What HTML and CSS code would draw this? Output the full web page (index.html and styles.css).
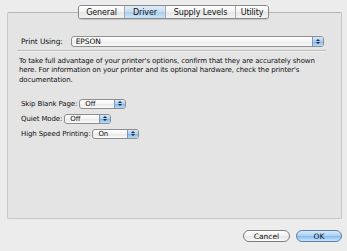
FILE: index.html
```html
<!DOCTYPE html>
<html lang="en">
<head>
    <meta charset="UTF-8">
    <title>Print Options</title>
    <link rel="stylesheet" href="styles.css">
</head>
<body>
    <div class="window">
        <div class="tabs">
            <div class="tab">General</div>
            <div class="tab selected">Driver</div>
            <div class="tab">Supply Levels</div>
            <div class="tab last">Utility</div>
        </div>
        <div class="panel">
            <div class="print-row">
                <span class="label">Print Using:</span>
                <div class="popup wide">
                    <span class="value">EPSON</span>
                    <span class="arrows"><i class="up"></i><i class="down"></i></span>
                </div>
            </div>
            <div class="sep"></div>
            <p class="info">To take full advantage of your printer's options, confirm that they are accurately shown here. For information on your printer and its optional hardware, check the printer's documentation.</p>
            <div class="options">
                <div class="option">
                    <span class="label">Skip Blank Page:</span>
                    <div class="popup">
                        <span class="value">Off</span>
                        <span class="arrows"><i class="up"></i><i class="down"></i></span>
                    </div>
                </div>
                <div class="option">
                    <span class="label">Quiet Mode:</span>
                    <div class="popup">
                        <span class="value">Off</span>
                        <span class="arrows"><i class="up"></i><i class="down"></i></span>
                    </div>
                </div>
                <div class="option">
                    <span class="label">High Speed Printing:</span>
                    <div class="popup">
                        <span class="value">On</span>
                        <span class="arrows"><i class="up"></i><i class="down"></i></span>
                    </div>
                </div>
            </div>
        </div>
        <div class="buttons">
            <button class="btn">Cancel</button>
            <button class="btn default">OK</button>
        </div>
    </div>
</body>
</html>
```

FILE: styles.css
```css
body {
    margin: 0;
    background-color: #ececec;
    font-family: "DejaVu Sans", sans-serif;
    font-size: 7px;
    letter-spacing: -0.12px;
    color: #111;
}
.window {
    width: 347px;
    height: 251px;
    padding-top: 5px;
    box-sizing: border-box;
}
.tabs {
    display: flex;
    margin-left: 78px;
    width: 191px;
    height: 14px;
    position: relative;
    z-index: 1;
    border: 1px solid #8a8a8a;
    border-radius: 3px;
    box-sizing: border-box;
    overflow: hidden;
    box-shadow: 0 1px 1px rgba(0, 0, 0, 0.15);
}
.tab {
    display: flex;
    align-items: center;
    justify-content: center;
    font-size: 8px;
    background: linear-gradient(#ffffff, #f1f1f1 50%, #e6e6e6 51%, #f4f4f4);
    border-right: 1px solid #a9a9a9;
}
.tab:nth-child(1) { width: 45px; }
.tab:nth-child(2) { width: 40px; }
.tab:nth-child(3) { width: 69px; }
.tab:nth-child(4) { flex: 1; }
.tab.last {
    border-right: none;
}
.tab.selected {
    background: linear-gradient(#e0edf9, #c3dcf4 50%, #aacdf0 51%, #cde4f8);
}
.panel {
    margin: -7px 5px 0 7px;
    height: 207px;
    box-sizing: border-box;
    padding: 0 17px 0 13px;
    background-color: #e4e4e4;
    border: 1px solid #c6c6c6;
    border-top-color: #b3b3b3;
    border-radius: 2px;
}
.print-row {
    display: flex;
    align-items: center;
    margin-top: 23px;
}
.print-row .label {
    font-size: 7.5px;
    margin-right: 8px;
}
.popup {
    display: flex;
    align-items: center;
    width: 47px;
    height: 10px;
    box-sizing: border-box;
    background: linear-gradient(#ffffff, #f3f3f3 50%, #e9e9e9 51%, #fafafa);
    border: 1px solid #8e8e8e;
    border-radius: 3px;
    overflow: hidden;
}
.popup.wide {
    flex: 1;
    height: 11px;
}
.popup .value {
    flex: 1;
    padding-left: 5px;
}
.popup.wide .value {
    font-size: 7.5px;
    padding-left: 4px;
}
.arrows {
    display: flex;
    flex-direction: column;
    align-items: center;
    justify-content: center;
    gap: 1px;
    width: 10px;
    height: 100%;
    background: linear-gradient(#d6e7f8, #a9cdf1 50%, #7fb4ea 51%, #bcdcf8);
    border-left: 1px solid #7a98bb;
}
.arrows i {
    width: 0;
    height: 0;
    border-left: 2px solid transparent;
    border-right: 2px solid transparent;
}
.arrows .up {
    border-bottom: 2px solid #1d2a3a;
}
.arrows .down {
    border-top: 2px solid #1d2a3a;
}
.sep {
    height: 1px;
    background-color: #b9b9b9;
    border-bottom: 1px solid #f3f3f3;
    margin: 3px -2px 0 -4px;
}
.info {
    margin: 5px 0 0 -2px;
    line-height: 9.3px;
}
.options {
    margin-top: 14px;
    display: flex;
    flex-direction: column;
    gap: 5px;
}
.option {
    display: flex;
    align-items: center;
}
.option .label {
    margin-right: 2px;
}
.buttons {
    display: flex;
    justify-content: flex-end;
    gap: 6px;
    margin: 11px 5px 0 0;
}
.btn {
    width: 47px;
    height: 12px;
    padding: 0;
    font-family: "DejaVu Sans", sans-serif;
    font-size: 7.5px;
    color: #111;
    border: 1px solid #7d7d7d;
    border-radius: 6px;
    background: linear-gradient(#ffffff, #f2f2f2 50%, #e4e4e4 51%, #fbfbfb);
}
.btn.default {
    width: 46px;
    border-color: #5d7fa8;
    background: linear-gradient(#d8e9f9, #a9cff3 50%, #82bbee 51%, #c8e6fb);
}
```
